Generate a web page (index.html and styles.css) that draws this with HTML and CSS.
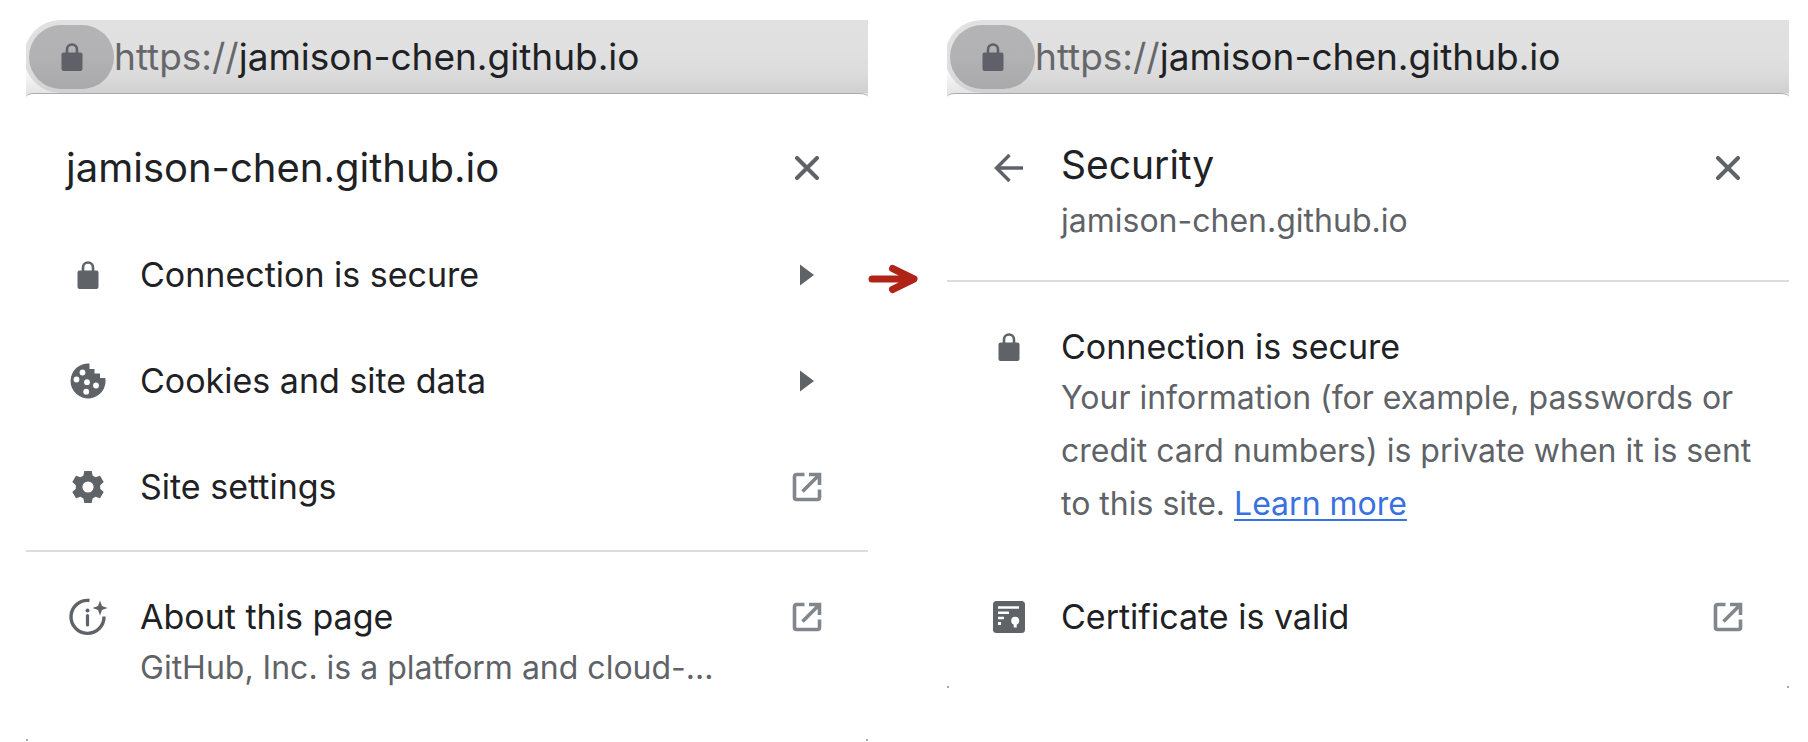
FILE: index.html
```
<!DOCTYPE html>
<html lang="en">
<head>
<meta charset="utf-8">
<meta name="viewport" content="width=device-width, initial-scale=1">
<title>Site information</title>
<link rel="stylesheet" href="styles.css">
</head>
<body>
<svg class="sprite" aria-hidden="true">
  <symbol id="lock" viewBox="0 0 22 28"><path d="M2.500 9.500H4.700V6.500a6.300 6.300 0 0 1 12.600 0V9.500H19.500A2 2 0 0 1 21.500 11.500V26A2 2 0 0 1 19.500 28H2.500A2 2 0 0 1 .5 26V11.500A2 2 0 0 1 2.500 9.500ZM7.300 9.500H14.700V6.500a3.700 3.700 0 0 0-7.400 0Z" fill="currentColor" fill-rule="evenodd"/></symbol>
  <symbol id="close" viewBox="0 0 24 24"><path d="M2 2 22 22M22 2 2 22" fill="none" stroke="currentColor" stroke-width="4" stroke-linecap="round"/></symbol>
  <symbol id="open" viewBox="0 0 30 30"><path d="M12.500 2.500H4.500a2 2 0 0 0-2 2V25.500a2 2 0 0 0 2 2H25.500a2 2 0 0 0 2-2V17.500M17 2.500H27.500V13M26.500 3.500 10.500 19.500" fill="none" stroke="currentColor" stroke-width="3.600"/></symbol>
  <symbol id="tri" viewBox="0 0 14 22"><path d="M0 .5 14 11 0 21.500Z" fill="currentColor"/></symbol>
</svg>

<main class="stage">
  <section class="shot">
    <div class="bar">
      <div class="omnibox">
        <button class="chip" type="button" aria-label="View site information"><svg class="i-lock"><use href="#lock"/></svg></button>
        <p class="url"><span class="scheme">https://</span>jamison-chen.github.io</p>
      </div>
    </div>
    <div class="popup tall">
      <header class="head">
        <h1 class="title site">jamison-chen.github.io</h1>
        <button class="slot" type="button" aria-label="Close"><svg class="i-close"><use href="#close"/></svg></button>
      </header>
      <nav class="menu">
        <button class="row" type="button">
          <span class="slot"><svg class="i-lock"><use href="#lock"/></svg></span>
          <span class="label">Connection is secure</span>
          <span class="slot"><svg class="i-tri"><use href="#tri"/></svg></span>
        </button>
        <button class="row" type="button">
          <span class="slot"><svg class="i-cookie" viewBox="0 0 36 36"><path d="M19.500.5A17.500 17.500 0 1 0 35.300 15H30V10.500H24.500V6H19.500Z" fill="currentColor"/><g fill="#fff"><circle cx="12.500" cy="9.500" r="2.900"/><circle cx="6.500" cy="16.500" r="2.900"/><circle cx="17" cy="19.200" r="2.900"/><circle cx="26" cy="22.500" r="2.900"/><circle cx="16.200" cy="28.700" r="2.900"/></g></svg></span>
          <span class="label">Cookies and site data</span>
          <span class="slot"><svg class="i-tri"><use href="#tri"/></svg></span>
        </button>
        <button class="row" type="button">
          <span class="slot"><svg class="i-gear" viewBox="0 0 32 32"><path fill="currentColor" fill-rule="evenodd" d="M12.300 0H19.700L20.600 4.600 23.500 6.200 28 4.700 31.700 11 28.200 14.200V17.800L31.700 21 28 27.300 23.500 25.800 20.600 27.400 19.700 32H12.300L11.400 27.400 8.500 25.800 4 27.300 .3 21 3.800 17.800V14.200L.3 11 4 4.700 8.500 6.200 11.400 4.600ZM16 10.400A5.600 5.600 0 1 0 16 21.600 5.600 5.600 0 1 0 16 10.400Z"/></svg></span>
          <span class="label">Site settings</span>
          <span class="slot"><svg class="i-open"><use href="#open"/></svg></span>
        </button>
      </nav>
      <hr class="rule">
      <button class="row block" type="button">
        <span class="slot"><svg class="i-about" viewBox="0 0 38 38"><path d="M20.500 2.500A16.500 16.500 0 1 0 35 18.500" fill="none" stroke="currentColor" stroke-width="3.400"/><path d="M31 2.500 33 8 38.500 10 33 12 31 17.500 29 12 23.500 10 29 8Z" fill="currentColor"/><circle cx="18.500" cy="12.500" r="2" fill="currentColor"/><path d="M18.500 17.500V27" stroke="currentColor" stroke-width="3.200" stroke-linecap="round"/></svg></span>
        <span class="text"><span class="label">About this page</span><span class="desc">GitHub, Inc. is a platform and cloud-...</span></span>
        <span class="slot"><svg class="i-open"><use href="#open"/></svg></span>
      </button>
    </div>
  </section>

  <svg class="arrow" viewBox="0 0 50 30" aria-hidden="true"><path d="M4 15H44M24.500 4.500 46 15 24.500 25.500" fill="none" stroke="#b02418" stroke-width="7" stroke-linecap="round" stroke-linejoin="round"/></svg>

  <section class="shot">
    <div class="bar">
      <div class="omnibox">
        <button class="chip" type="button" aria-label="View site information"><svg class="i-lock"><use href="#lock"/></svg></button>
        <p class="url"><span class="scheme">https://</span>jamison-chen.github.io</p>
      </div>
    </div>
    <div class="popup short">
      <header class="head sub">
        <button class="slot" type="button" aria-label="Back"><svg class="i-back" viewBox="0 0 30 30"><path d="M29 15H3M15.500 2 2.500 15 15.500 28" fill="none" stroke="currentColor" stroke-width="3.400"/></svg></button>
        <div class="text"><h2 class="title">Security</h2><p class="desc">jamison-chen.github.io</p></div>
        <button class="slot" type="button" aria-label="Close"><svg class="i-close"><use href="#close"/></svg></button>
      </header>
      <hr class="rule">
      <div class="row info">
        <span class="slot"><svg class="i-lock"><use href="#lock"/></svg></span>
        <div class="text"><h3 class="label">Connection is secure</h3><p class="desc">Your information (for example, passwords or credit card numbers) is private when it is sent to this site. <a class="link" href="#learn">Learn more</a></p></div>
      </div>
      <button class="row cert" type="button">
        <span class="slot"><svg class="i-cert" viewBox="0 0 32 32"><rect width="32" height="32" rx="3.500" fill="currentColor"/><path d="M5 5.200H26V7.700H5ZM5 10.500H16V13H5ZM5 15.800H11V18.300H5ZM5 21H8V24H5Z" fill="#fff"/><circle cx="22.200" cy="19.700" r="4" fill="#fff"/><path d="M20.700 22H23.700V26.500H20.700Z" fill="#fff"/></svg></span>
        <span class="label">Certificate is valid</span>
        <span class="slot"><svg class="i-open"><use href="#open"/></svg></span>
      </button>
    </div>
  </section>
</main>
</body>
</html>
```

FILE: styles.css
```
* { box-sizing: border-box; }
body { margin: 0; background: #fff; color: #202124; font-family: Inter, "Liberation Sans", sans-serif; }
h1, h2, h3, p { margin: 0; font-weight: 400; }
button { margin: 0; padding: 0; border: 0; background: none; color: inherit; font: inherit; text-align: left; cursor: pointer; }
svg { display: block; flex: none; }
.sprite { position: absolute; width: 0; height: 0; }

.stage { display: grid; grid-template-columns: minmax(0, 1fr) 79px minmax(0, 1fr); align-items: start; padding: 20px 19px 0 26px; }
.arrow { overflow: visible; width: 50px; height: 30px; margin-top: 244px; }

.bar { overflow: hidden; padding-bottom: 4px; background: linear-gradient(#fff 60%, #e0e0e0); }
.omnibox { display: flex; align-items: center; height: 73px; margin-left: -2px; padding-left: 5px; border-radius: 37px 0 0 37px; background: linear-gradient(#e1e1e1, #e0e0e0 45%, #dbdbdb 75%, #d0d0d0); }
.chip { display: flex; align-items: center; justify-content: center; width: 85px; height: 64px; border-radius: 32px; background: linear-gradient(#b4b4b6, #b2b2b4 50%, #a9a9ab); color: #5f6068; }
.url { font-size: 37px; line-height: 44px; white-space: nowrap; }
.scheme { color: #66676a; }

.popup { position: relative; margin-top: -4px; border-top: 1px solid #aaa; border-radius: 8px 8px 0 0 / 4px 4px 0 0; background: #fff; }
.tall { padding-bottom: 47px; }
.short { padding-bottom: 18px; }
.popup::before, .popup::after { content: ""; position: absolute; bottom: 0; width: 2px; height: 2px; background: #aaa; }
.popup::before { left: 0; }
.popup::after { right: 0; }

.head { display: flex; align-items: center; justify-content: space-between; padding: 51px 39px 31px 40px; }
.head.sub { align-items: flex-start; justify-content: flex-start; gap: 30px; padding: 48px 39px 33px 40px; }
.title { font-size: 39px; line-height: 46px; }
.title.site { font-size: 40px; }
.slot { display: flex; flex: none; align-items: center; justify-content: center; width: 44px; height: 46px; color: #5f6368; }
.sub .slot { height: 52px; }
.sub .desc { margin-top: 6px; }
.row { display: flex; align-items: center; gap: 30px; width: 100%; min-height: 106px; padding: 0 39px 0 40px; }
.text { flex: 1; min-width: 0; }
.label { display: block; flex: 1; font-size: 34px; line-height: 46px; }
.desc { display: block; margin-top: 1px; color: #5f6368; font-size: 32px; line-height: 53px; }
.rule { height: 2px; margin: 0; border: 0; background: #dadce0; }
.menu { padding-bottom: 10px; }
.block { align-items: flex-start; padding-top: 42px; }
.info { align-items: flex-start; padding-top: 42px; padding-right: 24px; }
.cert { margin-top: 34px; }
.link { color: #3871e0; text-decoration: underline; text-decoration-thickness: 2px; text-underline-offset: 4px; }

.i-lock { width: 22px; height: 28px; }
.i-close { width: 24px; height: 24px; }
.i-open { width: 30px; height: 30px; color: #80868b; }
.i-tri { width: 14px; height: 22px; }
.i-cookie { width: 36px; height: 36px; }
.i-gear { width: 32px; height: 32px; }
.i-about { width: 38px; height: 38px; overflow: visible; }
.i-back { width: 30px; height: 30px; }
.i-cert { width: 32px; height: 32px; }
```
